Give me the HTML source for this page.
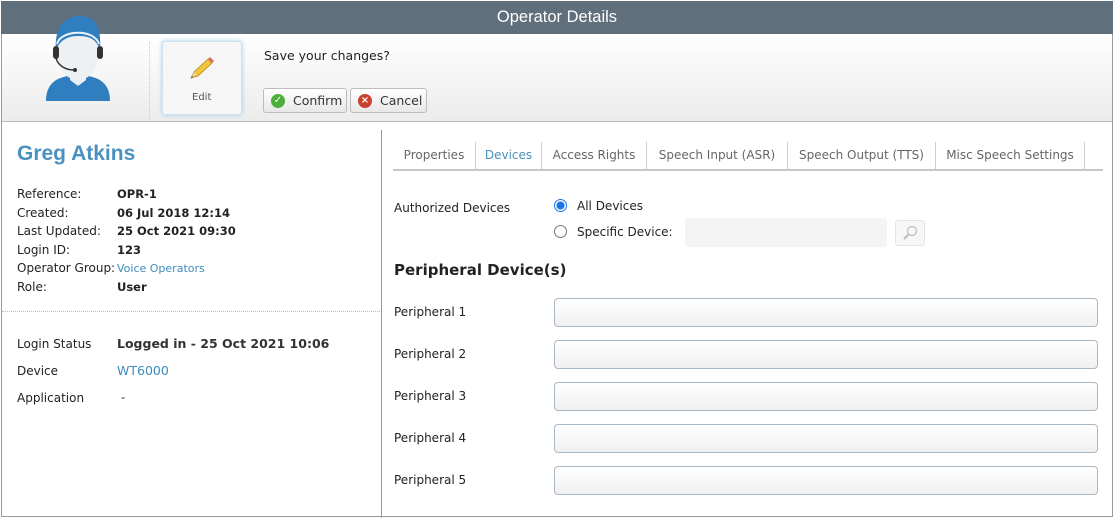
<!DOCTYPE html>
<html><head><meta charset="utf-8"><style>
*{box-sizing:border-box;margin:0;padding:0}
body{width:1116px;height:519px;background:#fff;font-family:"DejaVu Sans","Liberation Sans",sans-serif;font-size:11.5px;color:#222;position:relative;overflow:hidden}
.a{position:absolute;white-space:nowrap}
.frame{position:absolute;left:1px;top:1px;width:1112px;height:516px;border:1px solid #9a9a9a}
.hdr{position:absolute;left:1px;top:1px;width:1112px;height:33px;background:#5f6f7b;color:#fff;font-family:"Liberation Sans",sans-serif;font-size:16.5px;text-align:center;line-height:33px}
.tb{position:absolute;left:2px;top:34px;width:1110px;height:88px;background:linear-gradient(#fff,#ececec);border-bottom:1px solid #b8b8b8}
.btn{position:absolute;top:88px;height:25px;border:1px solid #bcbcbc;border-radius:3px;background:linear-gradient(#fff,#e8e8e8);font-size:12.5px;line-height:23px;color:#333;padding-left:29px}
.ic{position:absolute;left:7px;top:5px;width:14px;height:14px;border-radius:50%;color:#fff;font-size:10px;line-height:14px;text-align:center;font-weight:bold}
.lbl{font-size:12px}
.b{font-weight:bold}
.tab{position:absolute;top:142px;height:27px;line-height:26px;font-size:12px;color:#666;text-align:center;border-right:1px solid #ccc}
.inp{position:absolute;left:554px;width:544px;height:29px;border:1px solid #a9b8c4;border-radius:4px;background:linear-gradient(#fff,#f0f0f0)}
</style></head><body>
<div class="frame"></div>
<div class="hdr">Operator Details</div>
<div class="tb"></div>
<svg class="a" style="left:38px;top:14px" width="80" height="90" viewBox="0 0 80 90">
<path d="M8 87 C8 70 18 64 30 62 L50 62 C62 64 72 70 72 87 Z" fill="#2f7fc0"/>
<path d="M32 58 L48 58 L48 66 L40 72 L32 66 Z" fill="#e8eef2"/>
<ellipse cx="40" cy="40" rx="21" ry="26" fill="#eef1f3"/>
<path d="M18 36 C16 10 30 2 42 2 C56 2 64 12 62 36 C58 24 50 22 40 22 C30 22 22 26 18 36Z" fill="#2f7fc0"/>
<path d="M19 30 C22 16 56 14 61 30" stroke="#eaf3fa" stroke-width="2" fill="none"/>
<rect x="15" y="32" width="6" height="13" rx="3" fill="#333"/>
<rect x="59" y="32" width="6" height="13" rx="3" fill="#333"/>
<path d="M18 44 C20 52 28 56 36 56" stroke="#333" stroke-width="1.5" fill="none"/>
<circle cx="37" cy="56" r="2" fill="#333"/>
</svg>
<div class="a" style="left:149px;top:42px;height:78px;border-left:1px dotted #ccc"></div>
<div class="a" style="left:162px;top:41px;width:80px;height:74px;border:1px solid #cfe3ef;border-radius:3px;background:#f6f6f6;box-shadow:0 0 5px #9fd0ea"></div>
<svg class="a" style="left:188px;top:57px" width="28" height="24" viewBox="0 0 28 24"><path d="M3 21 L6 15 L20 2 L24 6 L10 19 Z" fill="#f3c53a" stroke="#b08a20" stroke-width=".8"/><path d="M20 2 L24 6 L26 4 L22 0Z" fill="#e46a6a"/><path d="M3 21 L6 15 L9 18Z" fill="#e9cfa1"/><path d="M3 21 L4 19 L5 20Z" fill="#333"/></svg>
<div class="a" style="left:192px;top:92px;font-size:10px;color:#555">Edit</div>
<div class="a" style="left:264px;top:48px;font-size:12.5px">Save your changes?</div>
<div class="btn a" style="left:263px;width:84px"><span class="ic" style="background:#4caf3c">✓</span>Confirm</div>
<div class="btn a" style="left:350px;width:77px"><span class="ic" style="background:#c8412f">×</span>Cancel</div>

<div class="a" style="left:381px;top:130px;height:388px;border-left:1px solid #9a9a9a"></div>
<div class="a" style="left:17px;top:142px;font-family:'Liberation Sans',sans-serif;font-weight:bold;font-size:21px;color:#4a91c0">Greg Atkins</div>
<div class="a lbl" style="left:17px;top:187px">Reference:</div><div class="a b" style="left:117px;top:187px">OPR-1</div>
<div class="a lbl" style="left:17px;top:206px">Created:</div><div class="a b" style="left:117px;top:206px">06 Jul 2018 12:14</div>
<div class="a lbl" style="left:17px;top:224px">Last Updated:</div><div class="a b" style="left:117px;top:224px">25 Oct 2021 09:30</div>
<div class="a lbl" style="left:17px;top:243px">Login ID:</div><div class="a b" style="left:117px;top:243px">123</div>
<div class="a lbl" style="left:17px;top:261px">Operator Group:</div><div class="a" style="left:117px;top:262px;font-size:11px;color:#3d8cc0">Voice Operators</div>
<div class="a lbl" style="left:17px;top:280px">Role:</div><div class="a b" style="left:117px;top:280px">User</div>
<div class="a" style="left:2px;top:311px;width:378px;border-top:1px dotted #bbb"></div>
<div class="a lbl" style="left:17px;top:337px">Login Status</div><div class="a b" style="left:117px;top:336px;font-size:12.5px;color:#333">Logged in - 25 Oct 2021 10:06</div>
<div class="a lbl" style="left:17px;top:364px">Device</div><div class="a" style="left:117px;top:363px;font-size:12.5px;color:#3d8cc0">WT6000</div>
<div class="a lbl" style="left:17px;top:391px">Application</div><div class="a" style="left:121px;top:390px">-</div>

<div class="a" style="left:393px;top:169px;width:710px;border-top:2px solid #c8c8c8"></div>
<div class="tab" style="left:393px;width:83px">Properties</div>
<div class="tab" style="left:476px;width:66px;color:#4a8fbb">Devices</div>
<div class="tab" style="left:542px;width:105px">Access Rights</div>
<div class="tab" style="left:647px;width:141px">Speech Input (ASR)</div>
<div class="tab" style="left:788px;width:148px">Speech Output (TTS)</div>
<div class="tab" style="left:936px;width:149px">Misc Speech Settings</div>

<div class="a lbl" style="left:394px;top:201px">Authorized Devices</div>
<div class="a" style="left:554px;top:199px;width:13px;height:13px;border-radius:50%;border:1px solid #1a73e8;background:radial-gradient(#1a73e8 3.5px,#fff 4.5px)"></div>
<div class="a lbl" style="left:577px;top:199px">All Devices</div>
<div class="a" style="left:554px;top:225px;width:13px;height:13px;border-radius:50%;border:1px solid #777;background:#fff"></div>
<div class="a lbl" style="left:577px;top:225px">Specific Device:</div>
<div class="a" style="left:685px;top:218px;width:202px;height:29px;background:#f4f4f4;border-radius:3px"></div>
<div class="a" style="left:895px;top:220px;width:30px;height:26px;border:1px solid #e4e4e4;border-radius:3px;background:#f7f7f7"></div>
<svg class="a" style="left:902px;top:225px" width="16" height="16" viewBox="0 0 16 16"><circle cx="10" cy="6" r="4.5" fill="none" stroke="#bbb" stroke-width="1.2"/><path d="M7 9 L2 14" stroke="#bbb" stroke-width="2"/></svg>
<div class="a" style="left:394px;top:261px;font-weight:bold;font-size:15px;color:#222">Peripheral Device(s)</div>
<div class="a lbl" style="left:394px;top:305px">Peripheral 1</div><div class="inp" style="top:298px"></div>
<div class="a lbl" style="left:394px;top:347px">Peripheral 2</div><div class="inp" style="top:340px"></div>
<div class="a lbl" style="left:394px;top:389px">Peripheral 3</div><div class="inp" style="top:382px"></div>
<div class="a lbl" style="left:394px;top:431px">Peripheral 4</div><div class="inp" style="top:424px"></div>
<div class="a lbl" style="left:394px;top:473px">Peripheral 5</div><div class="inp" style="top:466px"></div>
</body></html>
